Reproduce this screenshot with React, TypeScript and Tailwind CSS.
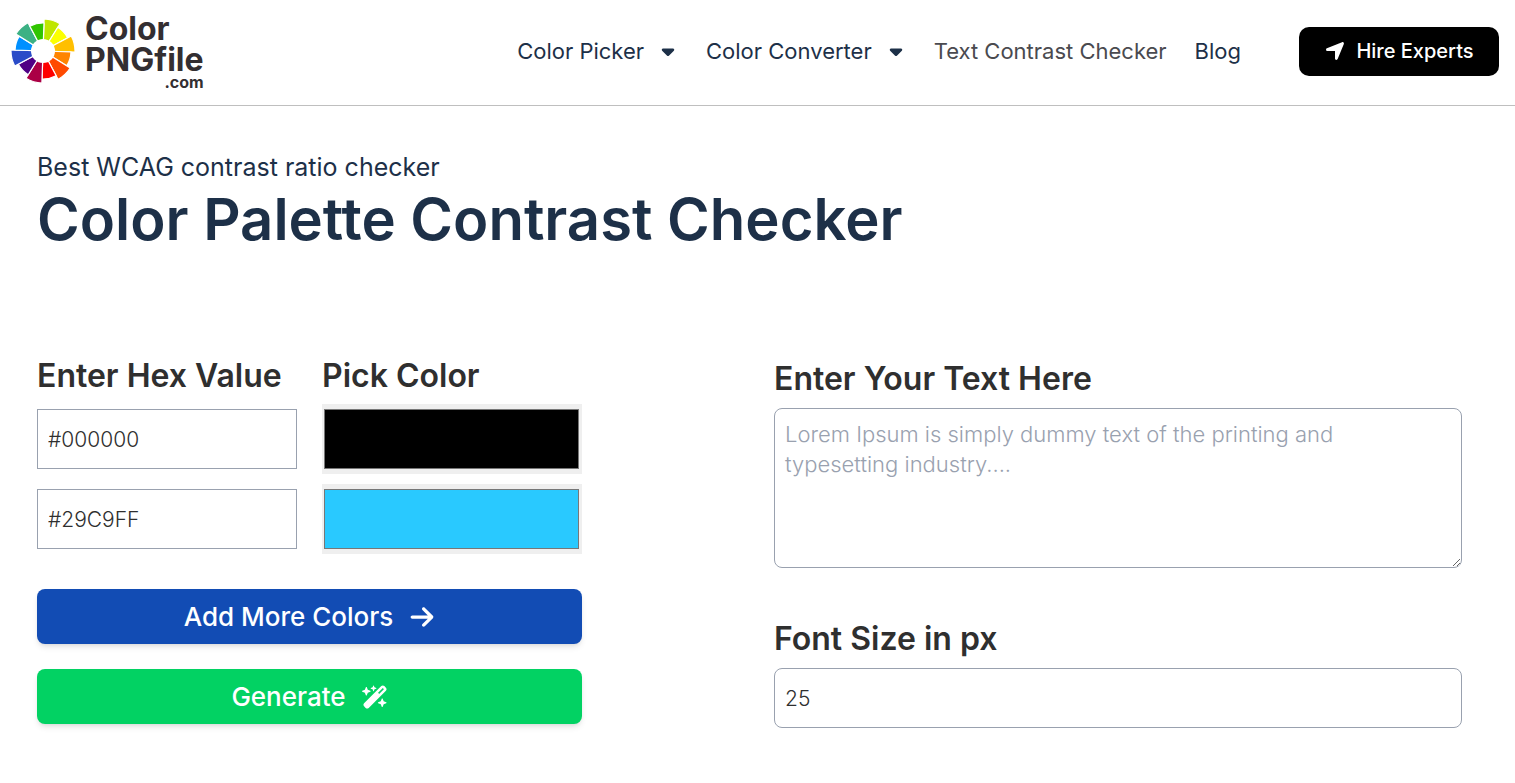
import { useState } from "react";
import { FaArrowRight, FaCaretDown, FaLocationArrow, FaWandMagicSparkles } from "react-icons/fa6";

const WHEEL = [
  { color: "#bfe600", r: 32 },
  { color: "#fbff00", r: 28 },
  { color: "#ffbf00", r: 32 },
  { color: "#ff8400", r: 28 },
  { color: "#ff4a00", r: 32 },
  { color: "#ff0000", r: 28 },
  { color: "#ab0045", r: 32 },
  { color: "#4f0085", r: 28 },
  { color: "#2a4bc8", r: 32 },
  { color: "#0090ff", r: 28 },
  { color: "#3cb184", r: 32 },
  { color: "#30c500", r: 28 },
];

// One slice of the wheel, 30 degrees wide, starting at the top
function slicePath(index: number, r: number) {
  const point = (deg: number) => {
    const a = ((deg - 90) * Math.PI) / 180;
    return `${(32 + r * Math.cos(a)).toFixed(2)} ${(32 + r * Math.sin(a)).toFixed(2)}`;
  };
  return `M32 32 L${point(index * 30 + 2)} A${r} ${r} 0 0 1 ${point(index * 30 + 32)} Z`;
}

function Logo() {
  return (
    <a href="#" aria-label="Color PNGfile.com" className="flex items-center gap-2.5 text-[#332e31]">
      <svg viewBox="0 0 64 64" className="size-16" aria-hidden="true">
        {WHEEL.map((slice, i) => (
          <path key={slice.color} d={slicePath(i, slice.r)} fill={slice.color} stroke="#fff" strokeWidth="1.2" />
        ))}
        <circle cx="32" cy="32" r="12" fill="#fff" />
      </svg>
      <span className="flex flex-col font-bold">
        <span className="text-[32px] leading-[31px]">Color</span>
        <span className="text-[32px] leading-[31px]">PNGfile</span>
        <span className="text-right text-base leading-[14px]">.com</span>
      </span>
    </a>
  );
}

function Header() {
  return (
    <header className="flex items-center justify-between border-b border-[#bfbfbf] pt-[13px] pr-4 pb-4 pl-[11px]">
      <Logo />
      <div className="flex items-center gap-[58px]">
        <nav className="flex items-center gap-7 text-[22px] leading-8 text-[#1d3048]">
          <button className="flex cursor-pointer items-center gap-3.5">
            Color Picker <FaCaretDown className="size-5" />
          </button>
          <button className="flex cursor-pointer items-center gap-3.5">
            Color Converter <FaCaretDown className="size-5" />
          </button>
          <a href="#" className="text-[#4a4a4f]">Text Contrast Checker</a>
          <a href="#">Blog</a>
        </nav>
        <a href="#" className="flex h-[49px] w-[200px] items-center justify-center gap-2.5 rounded-[10px] bg-black text-xl font-medium text-white">
          <FaLocationArrow className="size-[22px]" />
          Hire Experts
        </a>
      </div>
    </header>
  );
}

export default function App() {
  const [colors, setColors] = useState(["#000000", "#29C9FF"]);
  const [text, setText] = useState("");
  const [fontSize, setFontSize] = useState("25");

  const updateColor = (index: number, value: string) =>
    setColors(colors.map((c, i) => (i === index ? value.toUpperCase() : c)));

  return (
    <div className="min-h-screen bg-white font-['Inter',sans-serif] text-[#2f2f2f]">
      <Header />
      <main className="pt-[45px] pr-[53px] pb-14 pl-[37px]">
        <p className="text-[25px] leading-8 text-[#1d3048]">Best WCAG contrast ratio checker</p>
        <h1 className="text-[58px] leading-[72px] font-semibold text-[#1d3048]">Color Palette Contrast Checker</h1>

        <div className="mt-[103px] grid grid-cols-[545fr_688fr] gap-x-48">
          <form onSubmit={(e) => e.preventDefault()}>
            <div className="grid grid-cols-2 gap-x-[25px] gap-y-2.5 text-[21px] font-light">
              <h2 id="hex-label" className="text-[32px] leading-9 font-semibold">Enter Hex Value</h2>
              <h2 id="pick-label" className="text-[32px] leading-9 font-semibold">Pick Color</h2>
              {colors.map((color, i) => (
                <div key={i} className="contents">
                  <input
                    type="text"
                    aria-labelledby="hex-label"
                    value={color}
                    onChange={(e) => updateColor(i, e.target.value)}
                    className="h-[60px] w-full self-center border border-gray-400 px-2.5"
                  />
                  <input
                    type="color"
                    aria-labelledby="pick-label"
                    value={color.toLowerCase()}
                    onChange={(e) => updateColor(i, e.target.value)}
                    className="h-[70px] w-full cursor-pointer bg-[#efefef] py-px pr-px"
                  />
                </div>
              ))}
            </div>
            <button
              type="button"
              onClick={() => setColors([...colors, "#FFFFFF"])}
              className="mt-[35px] flex h-[55px] w-full cursor-pointer items-center justify-center gap-4 rounded-lg bg-[#124cb4] text-[26px] font-medium text-white shadow-md"
            >
              Add More Colors <FaArrowRight className="size-[26px]" />
            </button>
            <button
              type="submit"
              className="mt-[25px] flex h-[55px] w-full cursor-pointer items-center justify-center gap-4 rounded-lg bg-[#02d263] text-[26px] font-medium text-white shadow-md"
            >
              Generate <FaWandMagicSparkles className="size-[26px]" />
            </button>
          </form>

          <div className="flex flex-col text-[21px] font-light">
            <label htmlFor="sample" className="text-[32px] leading-[42px] font-semibold">Enter Your Text Here</label>
            <textarea
              id="sample"
              value={text}
              onChange={(e) => setText(e.target.value)}
              placeholder="Lorem Ipsum is simply dummy text of the printing and typesetting industry...."
              className="mt-2 h-40 w-full rounded-lg border border-gray-400 p-2.5 text-[22px] leading-[30px] placeholder:text-gray-400"
            />
            <label htmlFor="size" className="mt-[50px] text-[32px] leading-[42px] font-semibold">Font Size in px</label>
            <input
              id="size"
              type="text"
              inputMode="numeric"
              value={fontSize}
              onChange={(e) => setFontSize(e.target.value)}
              className="mt-2 h-[60px] w-full rounded-lg border border-gray-400 px-2.5"
            />
          </div>
        </div>
      </main>
    </div>
  );
}
